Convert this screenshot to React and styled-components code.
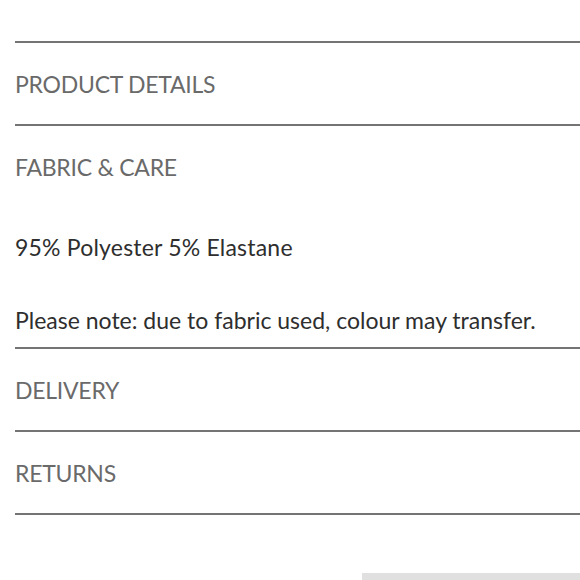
import React from "react";
import styled, { createGlobalStyle } from "styled-components";

const Global = createGlobalStyle`
  html, body { margin: 0; padding: 0; background: #ffffff; }
  body { font-family: "Lato", "Liberation Sans", sans-serif; }
`;

const Page = styled.div`
  padding: 41px 0 0 15px;
  width: 580px;
  box-sizing: border-box;
`;

const Section = styled.section`
  border-top: 2px solid #747474;
  &:last-of-type { border-bottom: 2px solid #747474; }
`;

const Heading = styled.h2`
  margin: 0;
  height: 81px;
  display: flex;
  align-items: center;
  font-size: 23px;
  font-weight: 400;
  color: #6a6a6a;
  letter-spacing: -0.25px;
`;

const Body = styled.div`
  padding: 26px 0 13px;
  display: flex;
  flex-direction: column;
  gap: 45px;
`;

const Para = styled.p`
  margin: 0;
  line-height: 28px;
  font-size: 23px;
  color: #2e2e2e;
  letter-spacing: ${(p) => (p.$wide ? "0.2px" : "0")};
`;

const Bar = styled.div`
  margin: 58px 0 0 auto;
  width: 218px;
  height: 8px;
  background: #e0e0e0;
`;

const sections = [
  { title: "PRODUCT DETAILS" },
  {
    title: "FABRIC & CARE",
    body: [
      { text: "95% Polyester 5% Elastane", wide: true },
      { text: "Please note: due to fabric used, colour may transfer.", wide: false },
    ],
  },
  { title: "DELIVERY" },
  { title: "RETURNS" },
];

export default function App() {
  return (
    <>
      <Global />
      <Page>
        {sections.map((s) => (
          <Section key={s.title}>
            <Heading>{s.title}</Heading>
            {s.body && (
              <Body>
                {s.body.map((p) => (
                  <Para key={p.text} $wide={p.wide}>
                    {p.text}
                  </Para>
                ))}
              </Body>
            )}
          </Section>
        ))}
        <Bar />
      </Page>
    </>
  );
}
